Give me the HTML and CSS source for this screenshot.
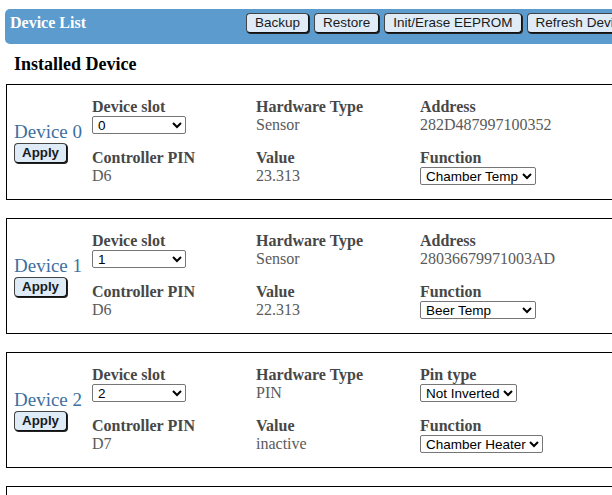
FILE: index.html
```html
<!DOCTYPE html>
<html>
<head>
<meta charset="utf-8">
<title>Device List</title>
<link rel="stylesheet" href="styles.css">
</head>
<body>
<div class="page">
  <div class="bar">
    <div class="bar-title">Device List</div>
    <div class="bar-buttons">
      <button class="btn">Backup</button>
      <button class="btn">Restore</button>
      <button class="btn">Init/Erase EEPROM</button>
      <button class="btn">Refresh Device List</button>
    </div>
  </div>

  <h2 class="section-title">Installed Device</h2>

  <div class="device">
    <div class="dev-name-cell">
      <div class="dev-name">Device 0</div>
      <button class="btn btn-apply">Apply</button>
    </div>
    <div class="field">
      <div class="label">Device slot</div>
      <select class="sel sel-slot"><option>0</option></select>
    </div>
    <div class="field">
      <div class="label">Hardware Type</div>
      <div class="value">Sensor</div>
    </div>
    <div class="field">
      <div class="label">Address</div>
      <div class="value">282D487997100352</div>
    </div>
    <div class="field">
      <div class="label">Controller PIN</div>
      <div class="value">D6</div>
    </div>
    <div class="field">
      <div class="label">Value</div>
      <div class="value">23.313</div>
    </div>
    <div class="field">
      <div class="label">Function</div>
      <select class="sel sel-func"><option>Chamber Temp</option></select>
    </div>
  </div>

  <div class="device">
    <div class="dev-name-cell">
      <div class="dev-name">Device 1</div>
      <button class="btn btn-apply">Apply</button>
    </div>
    <div class="field">
      <div class="label">Device slot</div>
      <select class="sel sel-slot"><option>1</option></select>
    </div>
    <div class="field">
      <div class="label">Hardware Type</div>
      <div class="value">Sensor</div>
    </div>
    <div class="field">
      <div class="label">Address</div>
      <div class="value">28036679971003AD</div>
    </div>
    <div class="field">
      <div class="label">Controller PIN</div>
      <div class="value">D6</div>
    </div>
    <div class="field">
      <div class="label">Value</div>
      <div class="value">22.313</div>
    </div>
    <div class="field">
      <div class="label">Function</div>
      <select class="sel sel-func"><option>Beer Temp</option></select>
    </div>
  </div>

  <div class="device">
    <div class="dev-name-cell">
      <div class="dev-name">Device 2</div>
      <button class="btn btn-apply">Apply</button>
    </div>
    <div class="field">
      <div class="label">Device slot</div>
      <select class="sel sel-slot"><option>2</option></select>
    </div>
    <div class="field">
      <div class="label">Hardware Type</div>
      <div class="value">PIN</div>
    </div>
    <div class="field">
      <div class="label">Pin type</div>
      <select class="sel sel-pin"><option>Not Inverted</option></select>
    </div>
    <div class="field">
      <div class="label">Controller PIN</div>
      <div class="value">D7</div>
    </div>
    <div class="field">
      <div class="label">Value</div>
      <div class="value">inactive</div>
    </div>
    <div class="field">
      <div class="label">Function</div>
      <select class="sel sel-heater"><option>Chamber Heater</option></select>
    </div>
  </div>

  <div class="device">
    <div class="dev-name-cell">
      <div class="dev-name">Device 3</div>
      <button class="btn btn-apply">Apply</button>
    </div>
    <div class="field">
      <div class="label">Device slot</div>
      <select class="sel sel-slot"><option>3</option></select>
    </div>
    <div class="field">
      <div class="label">Hardware Type</div>
      <div class="value">PIN</div>
    </div>
    <div class="field">
      <div class="label">Pin type</div>
      <select class="sel sel-pin"><option>Not Inverted</option></select>
    </div>
    <div class="field">
      <div class="label">Controller PIN</div>
      <div class="value">D5</div>
    </div>
    <div class="field">
      <div class="label">Value</div>
      <div class="value">inactive</div>
    </div>
    <div class="field">
      <div class="label">Function</div>
      <select class="sel sel-heater"><option>Chamber Cooler</option></select>
    </div>
  </div>
</div>
</body>
</html>
```

FILE: styles.css
```css
html, body {
  margin: 0;
  padding: 0;
  overflow: hidden;
  background: #fff;
}

body {
  font-family: "Liberation Serif", "Times New Roman", serif;
  color: #000;
}

.page {
  width: 720px;
  padding: 9px 0 0 5px;
}

.bar {
  display: flex;
  align-items: flex-start;
  height: 35px;
  box-sizing: border-box;
  padding: 4px 5px;
  background: #5b9bcd;
  border-radius: 5px;
}

.bar-title {
  flex: 0 0 236px;
  color: #fff;
  font-weight: bold;
  font-size: 16px;
  line-height: 19px;
}

.bar-buttons {
  display: flex;
  gap: 5px;
  white-space: nowrap;
}

.btn {
  font-family: "Liberation Sans", Arial, sans-serif;
  font-size: 13.5px;
  color: #1a1a1a;
  background: #dfebf7;
  border: 1px solid #444;
  border-right-color: #111;
  border-bottom-color: #111;
  box-shadow: 1px 1px 0 #222;
  border-radius: 4px;
  height: 20px;
  padding: 0 8px;
  line-height: 18px;
  box-sizing: border-box;
  margin: 0;
}

.section-title {
  font-size: 18px;
  font-weight: bold;
  line-height: 21px;
  margin: 10px 0 9px;
  padding-left: 9px;
}

.device {
  display: grid;
  grid-template-columns: 78px 164px 164px 164px;
  grid-template-rows: auto auto;
  row-gap: 15px;
  padding: 13px 0 14px 7px;
  margin: 0 0 18px 1px;
  border: 1px solid #000;
}

.dev-name-cell {
  grid-row: 1 / span 2;
  align-self: center;
  display: flex;
  flex-direction: column;
  align-items: flex-start;
}

.dev-name {
  font-size: 19px;
  line-height: 22px;
  color: #3d6f9f;
}

.btn-apply {
  font-weight: bold;
  font-size: 13.33px;
  height: 20px;
  padding: 0 7px;
  margin-top: 0;
}

.field {
  display: flex;
  flex-direction: column;
  align-items: flex-start;
}

.label {
  font-size: 16px;
  font-weight: bold;
  line-height: 18px;
  color: #474747;
}

.value {
  font-size: 16px;
  line-height: 18px;
  color: #5a5a5a;
}

.sel {
  font-family: "Liberation Sans", Arial, sans-serif;
  font-size: 13.5px;
  color: #000;
  background: #fff;
  border: 1px solid #767676;
  border-radius: 2px;
  height: 18px;
  padding: 0 0 0 1px;
  margin: 0;
  box-sizing: border-box;
}

.sel-slot { width: 94px; }
.sel-func { width: 116px; }
.sel-pin { width: 97px; }
.sel-heater { width: 123px; }
```
